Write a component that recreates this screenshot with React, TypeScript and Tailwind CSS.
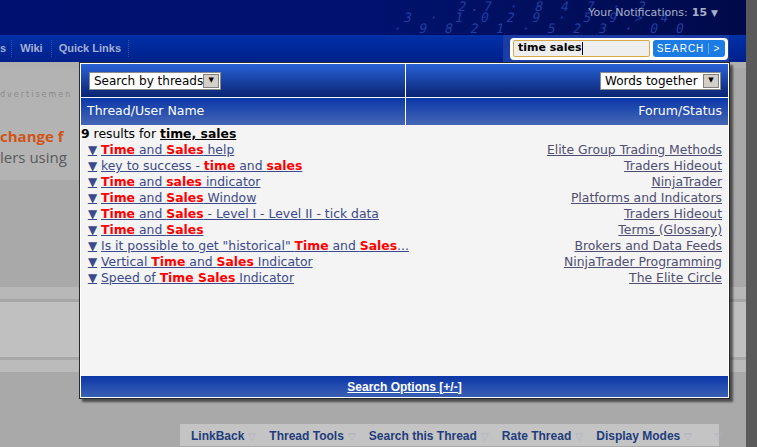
import React from 'react';

const results: [string, string][] = [
  ['*Time* and *Sales* help', 'Elite Group Trading Methods'],
  ['key to success - *time* and *sales*', 'Traders Hideout'],
  ['*Time* and *sales* indicator', 'NinjaTrader'],
  ['*Time* and *Sales* Window', 'Platforms and Indicators'],
  ['*Time* and *Sales* - Level I - Level II - tick data', 'Traders Hideout'],
  ['*Time* and *Sales*', 'Terms (Glossary)'],
  ['Is it possible to get "historical" *Time* and *Sales*...', 'Brokers and Data Feeds'],
  ['Vertical *Time* and *Sales* Indicator', 'NinjaTrader Programming'],
  ['Speed of *Time Sales* Indicator', 'The Elite Circle'],
];

// split "*word*" markers into highlighted spans
const Title: React.FC<{ text: string }> = ({ text }) => (
  <>
    {text.split('*').map((part, i) =>
      i % 2 === 1 ? (
        <b key={i} className="text-[#ff0000]">{part}</b>
      ) : (
        <span key={i}>{part}</span>
      )
    )}
  </>
);

const Select: React.FC<{ label: string; width: string }> = ({ label, width }) => (
  <div className={`flex items-center h-[18px] bg-white border border-[#8a8a8a] whitespace-nowrap ${width}`}>
    <span className="flex-1 pl-[4px] text-[12px] leading-none text-black">{label}</span>
    <span className="w-[16px] h-[14px] mr-[1px] flex items-center justify-center bg-[#d4d0c8] border border-[#808080] text-[7px] leading-none text-black">▼</span>
  </div>
);

const DigitRain: React.FC = () => (
  <div className="absolute left-[396px] top-[1px] w-[220px] -skew-x-12 text-[#1f3fa0] font-['DejaVu_Sans_Mono',monospace] text-[13px] leading-[11px] tracking-[5px] whitespace-nowrap select-none">
    <div className="pl-[60px]">2.7 · 8 4  7 · 2</div>
    <div className="pl-[8px]">3 · 1 0  2 9 · 5 9  &gt; 4</div>
    <div>· 9 8  2 1 · 5  2 3 · 0 0</div>
  </div>
);

const BarLink: React.FC<{ label: string }> = ({ label }) => (
  <span className="flex items-center gap-[4px]">
    <span>{label}</span>
    <span className="text-[#aeb2be] text-[10px] font-normal">▽</span>
  </span>
);

export default function App() {
  return (
    <div className="relative w-[757px] h-[447px] overflow-hidden flex bg-[#a9a9a9] font-['DejaVu_Sans',Verdana,sans-serif]">
      <div className="w-[746px] h-full flex flex-col">
        {/* banner */}
        <div className="relative h-[35px] bg-gradient-to-r from-[#001070] via-[#00126e] to-[#000a4a] overflow-hidden">
          <DigitRain />
          <div className="absolute right-[28px] top-[5px] flex items-center gap-[4px] text-[11px] font-bold text-[#a8b0cc]">
            <span className="font-normal">Your Notifications:</span>
            <span>15</span>
            <span className="text-[9px]">▼</span>
          </div>
        </div>

        {/* nav bar */}
        <div className="h-[27px] flex items-stretch bg-gradient-to-b from-[#0030a8] to-[#00208a] text-[11px] font-bold text-[#a6aed4] font-['Liberation_Sans',Arial,sans-serif]">
          <div className="flex items-center">
            <span className="pr-[5px] border-r border-dotted border-[#3050b0]">s</span>
            <span className="px-[8px] border-r border-dotted border-[#3050b0]">Wiki</span>
            <span className="px-[7px] border-r border-dotted border-[#3050b0]">Quick Links</span>
          </div>
          <div className="flex-1" />
          <div className="w-[226px] mr-[17px] flex items-center pl-[7px] bg-[#1a3ca4]">
            <div className="flex items-center gap-[3px] h-[22px] w-[218px] bg-white rounded-[4px] px-[3px]">
              <div className="h-[17px] w-[137px] bg-[#eeeeee] border border-[#d8a848] rounded-[2px] flex items-center pl-[4px] text-[11px] text-black font-bold font-['DejaVu_Sans',sans-serif]">
                time sales<span className="w-px h-[13px] bg-black" />
              </div>
              <div className="h-[17px] flex-1 bg-[#1c7ce4] rounded-[3px] flex items-center text-white font-normal text-[10px] tracking-[1px]">
                <span className="flex-1 text-center">SEARCH</span>
                <span className="w-px h-[11px] bg-[#6aa8f0]" />
                <span className="w-[16px] text-center">&gt;</span>
              </div>
            </div>
          </div>
        </div>

        {/* dimmed page behind */}
        <div className="h-[6px] bg-[#b0b0b0]" />
        <div className="flex">
          <div className="w-[80px] h-[112px] bg-[#b3b3b3] pt-[22px] whitespace-nowrap">
            <div className="text-[8px] leading-[10px] tracking-[2px] text-[#8a8a8a]">dvertisemen</div>
            <div className="mt-[28px] text-[15px] font-bold text-[#d05418] font-['Open_Sans',sans-serif] leading-[17px]">change f</div>
            <div className="mt-[4px] text-[15px] text-[#5a5a5a] font-['Open_Sans',sans-serif] leading-[17px]">lers using</div>
          </div>
        </div>
        <div className="h-[107px]" />
        <div className="h-[12px] bg-[#b8b8b8]" />
        <div className="h-[3px] bg-[#a6a6a6]" />
        <div className="h-[55px] bg-[#c0c0c0]" />
        <div className="h-[3px] bg-[#a8a8a8]" />
        <div className="h-[12px] bg-[#bbbbbb]" />
        <div className="h-[52px]" />
        <div className="flex h-[22px]">
          <div className="w-[180px]" />
          <div className="w-[539px] bg-[#c4c4c4] flex items-center gap-[13px] pl-[11px] pt-[2px] whitespace-nowrap text-[12px] font-bold text-[#1f3c7c] font-['Liberation_Sans',Arial,sans-serif]">
            <BarLink label="LinkBack" />
            <BarLink label="Thread Tools" />
            <BarLink label="Search this Thread" />
            <BarLink label="Rate Thread" />
            <BarLink label="Display Modes" />
            <span className="ml-[10px] text-[#aeb2be] text-[10px] font-normal">▽</span>
          </div>
        </div>
      </div>
      <div className="w-[11px] h-full bg-[#5a5a5a]" />

      {/* search results dropdown */}
      <div className="absolute left-[79px] top-[62px] w-[651px] border border-[#2a2a2a] bg-white shadow-[3px_3px_2px_rgba(0,0,0,0.55)]">
        <div className="flex flex-col border border-white">
          <div className="flex h-[33px] bg-gradient-to-b from-[#2a62d8] to-[#0a2472]">
            <div className="w-[325px] border-r border-white flex items-center pl-[8px]">
              <Select label="Search by threads" width="w-[132px]" />
            </div>
            <div className="flex-1 flex items-center justify-end pr-[7px]">
              <Select label="Words together" width="w-[121px]" />
            </div>
          </div>
          <div className="flex h-[27px] mt-px bg-gradient-to-b from-[#0a36a8] to-[#4466b4] text-white text-[12.5px]">
            <div className="w-[325px] border-r border-white flex items-center pl-[6px]">Thread/User Name</div>
            <div className="flex-1 flex items-center justify-end pr-[6px]">Forum/Status</div>
          </div>
          <div className="h-[251px] bg-[#f4f4f4] pt-[1px] text-[12.4px] leading-[16px]">
            <div className="pl-0 text-black">
              <b>9</b> results for <b className="underline">time, sales</b>
            </div>
            {results.map(([title, forum], i) => (
              <div key={i} className="flex items-center justify-between pr-[6px] whitespace-nowrap">
                <div className="flex items-center pl-[5px] text-[#3b4a8a]">
                  <span className="underline text-[12px] w-[13px] text-center">▼</span>
                  <span className="underline ml-[2px]"><Title text={title} /></span>
                </div>
                <span className="underline text-[#4e4e72]">{forum}</span>
              </div>
            ))}
          </div>
          <div className="h-[21px] bg-gradient-to-b from-[#0a36a8] to-[#3a60b4] flex items-center justify-center text-white text-[12px] font-bold font-['Liberation_Sans',Arial,sans-serif]">
            <span className="underline">Search Options [+/-]</span>
          </div>
        </div>
      </div>
    </div>
  );
}
